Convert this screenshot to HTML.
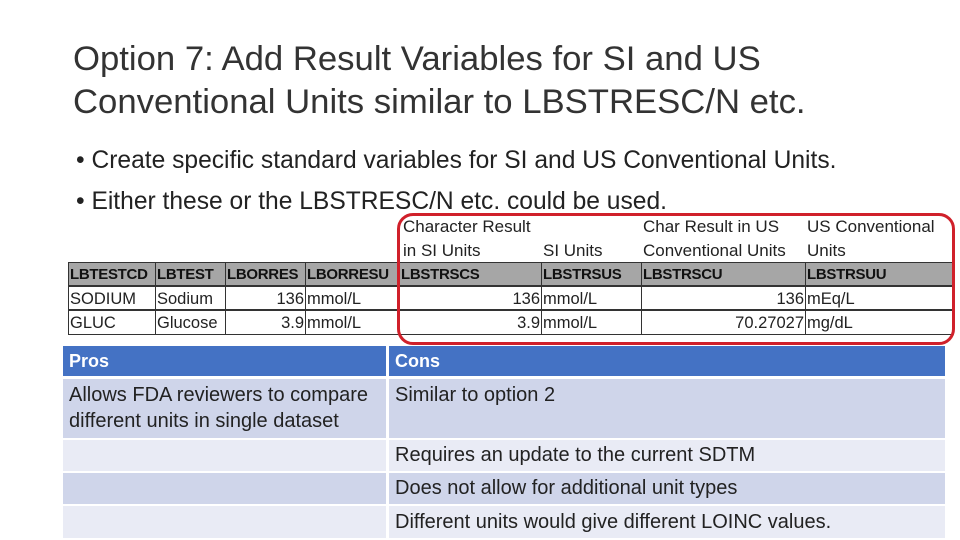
<!DOCTYPE html>
<html><head><meta charset="utf-8"><style>
body{margin:0;width:960px;height:540px;background:#fff;position:relative;overflow:hidden;font-family:"Liberation Sans",sans-serif;color:#222}
.a{position:absolute;white-space:nowrap}
.t{font-size:34.7px;color:#333;left:73px;line-height:43px}
.b{font-size:24.6px;left:76px;color:#222}
.c{position:absolute;font-size:16.5px;line-height:24px;height:24px;box-sizing:border-box;border:1px solid #333;padding:0 1px;overflow:hidden;white-space:nowrap}
.h{background:#a6a6a6;font-weight:bold;font-size:15px;color:#111;letter-spacing:-0.3px}
.r{text-align:right}
.p{position:absolute;font-size:20px;line-height:26px;padding:0 6px;box-sizing:border-box;color:#222}
.lb{position:absolute;white-space:nowrap;font-size:17px;line-height:24px}
</style></head><body>
<div class="a t" style="top:38px">Option 7: Add Result Variables for SI and US</div>
<div class="a t" style="top:81px">Conventional Units similar to LBSTRESC/N etc.</div>
<div class="a b" style="top:147px">• Create specific standard variables for SI and US Conventional Units.</div>
<div class="a b" style="top:188px">• Either these or the LBSTRESC/N etc. could be used.</div>

<div class="lb" style="left:403px;top:215px">Character Result<br>in SI Units</div>
<div class="lb" style="left:543px;top:239px">SI Units</div>
<div class="lb" style="left:643px;top:215px">Char Result in US<br>Conventional Units</div>
<div class="lb" style="left:807px;top:215px">US Conventional<br>Units</div>

<div class="c h" style="left:68px;top:262px;width:88px">LBTESTCD</div>
<div class="c h" style="left:155px;top:262px;width:71px">LBTEST</div>
<div class="c h" style="left:225px;top:262px;width:81px">LBORRES</div>
<div class="c h" style="left:305px;top:262px;width:95px">LBORRESU</div>
<div class="c h" style="left:399px;top:262px;width:143px">LBSTRSCS</div>
<div class="c h" style="left:541px;top:262px;width:101px">LBSTRSUS</div>
<div class="c h" style="left:641px;top:262px;width:165px">LBSTRSCU</div>
<div class="c h" style="left:805px;top:262px;width:148px">LBSTRSUU</div>

<div class="c" style="left:68px;top:286px;width:88px">SODIUM</div>
<div class="c" style="left:155px;top:286px;width:71px">Sodium</div>
<div class="c r" style="left:225px;top:286px;width:81px">136</div>
<div class="c" style="left:305px;top:286px;width:95px">mmol/L</div>
<div class="c r" style="left:399px;top:286px;width:143px">136</div>
<div class="c" style="left:541px;top:286px;width:101px">mmol/L</div>
<div class="c r" style="left:641px;top:286px;width:165px">136</div>
<div class="c" style="left:805px;top:286px;width:148px">mEq/L</div>

<div class="c" style="left:68px;top:310px;width:88px;height:25px">GLUC</div>
<div class="c" style="left:155px;top:310px;width:71px;height:25px">Glucose</div>
<div class="c r" style="left:225px;top:310px;width:81px;height:25px">3.9</div>
<div class="c" style="left:305px;top:310px;width:95px;height:25px">mmol/L</div>
<div class="c r" style="left:399px;top:310px;width:143px;height:25px">3.9</div>
<div class="c" style="left:541px;top:310px;width:101px;height:25px">mmol/L</div>
<div class="c r" style="left:641px;top:310px;width:165px;height:25px">70.27027</div>
<div class="c" style="left:805px;top:310px;width:148px;height:25px">mg/dL</div>

<div class="a" style="left:397px;top:213px;width:552px;height:126px;border:3px solid #d0202a;border-radius:16px"></div>

<div class="p" style="left:63px;top:346px;width:323px;height:30px;background:#4472c4;color:#fff;font-weight:bold;line-height:30px;font-size:18px">Pros</div>
<div class="p" style="left:389px;top:346px;width:556px;height:30px;background:#4472c4;color:#fff;font-weight:bold;line-height:30px;font-size:18px">Cons</div>
<div class="p" style="left:63px;top:379px;width:323px;height:59px;background:#cfd5ea;padding-top:3px">Allows FDA reviewers to compare<br>different units in single dataset</div>
<div class="p" style="left:389px;top:379px;width:556px;height:59px;background:#cfd5ea;padding-top:3px">Similar to option 2</div>
<div class="p" style="left:63px;top:440px;width:323px;height:31px;background:#e9ebf5"></div>
<div class="p" style="left:389px;top:440px;width:556px;height:31px;background:#e9ebf5;line-height:31px">Requires an update to the current SDTM</div>
<div class="p" style="left:63px;top:473px;width:323px;height:31px;background:#cfd5ea"></div>
<div class="p" style="left:389px;top:473px;width:556px;height:31px;background:#cfd5ea;line-height:31px">Does not allow for additional unit types</div>
<div class="p" style="left:63px;top:506px;width:323px;height:32px;background:#e9ebf5"></div>
<div class="p" style="left:389px;top:506px;width:556px;height:32px;background:#e9ebf5;line-height:32px">Different units would give different LOINC values.</div>
</body></html>
